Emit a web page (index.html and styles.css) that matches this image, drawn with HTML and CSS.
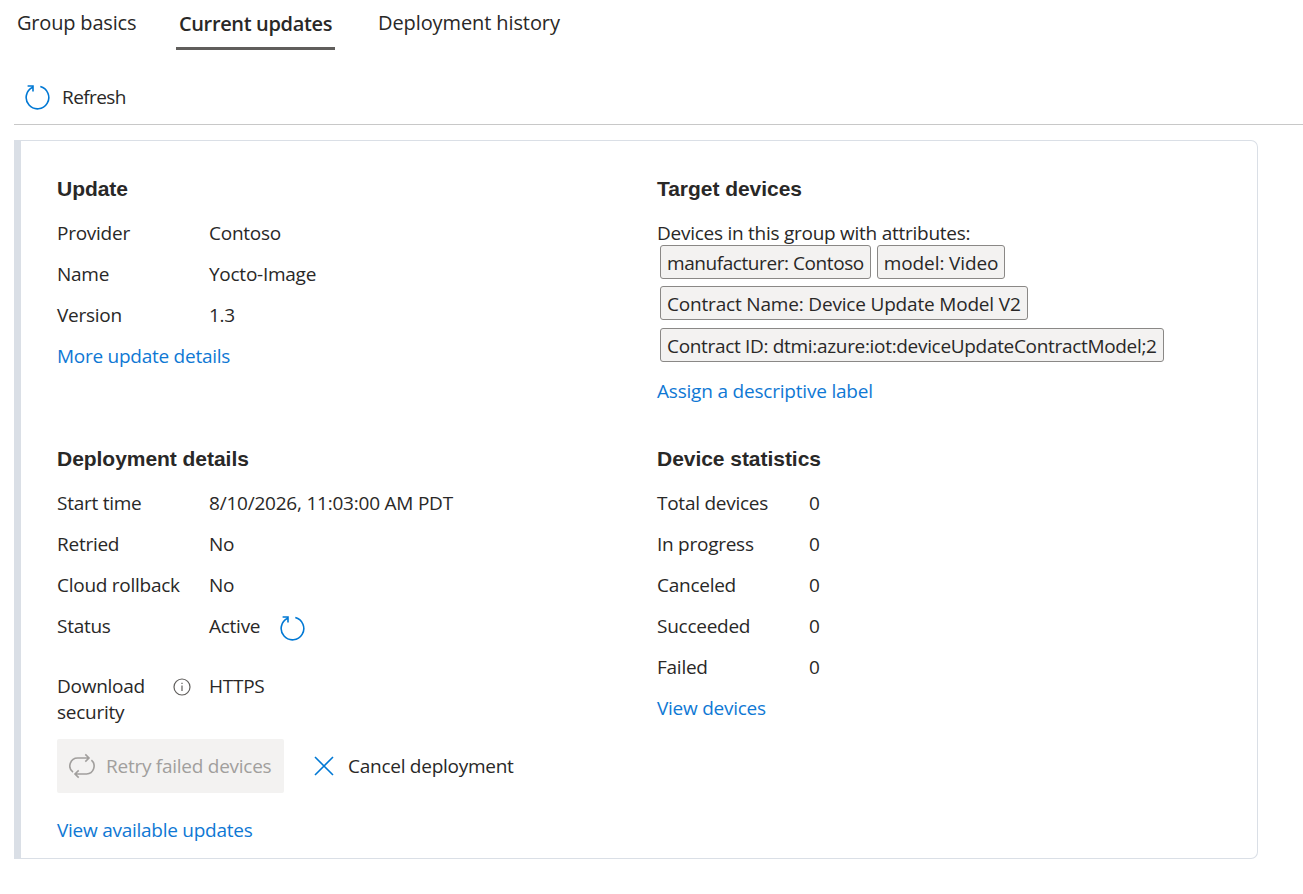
FILE: index.html
```html
<!DOCTYPE html>
<html lang="en">
<head>
    <meta charset="UTF-8">
    <meta name="viewport" content="width=device-width, initial-scale=1.0">
    <title>Current updates</title>
    <link rel="stylesheet" href="styles.css">
</head>
<body>
    <svg class="sprite">
        <symbol id="icon-refresh" viewBox="0 0 26 26">
            <path d="M16.3 2.6A11.3 11.3 0 1 1 8.7 3.3M3.6 2H9V7.5" />
        </symbol>
    </svg>

    <nav class="tabs">
        <a class="tab tab-basics">Group basics</a>
        <a class="tab active">Current updates</a>
        <a class="tab tab-history">Deployment history</a>
    </nav>

    <div class="toolbar">
        <svg class="icon-refresh"><use href="#icon-refresh" /></svg>
        <span class="refresh-label">Refresh</span>
    </div>

    <main class="card">
        <section class="update">
            <h2>Update</h2>
            <dl>
                <dt>Provider</dt><dd>Contoso</dd>
                <dt>Name</dt><dd>Yocto-Image</dd>
                <dt>Version</dt><dd>1.3</dd>
            </dl>
            <a class="link link-more">More update details</a>
        </section>

        <section class="target">
            <h2>Target devices</h2>
            <p>Devices in this group with attributes:</p>
            <div class="chips">
                <span class="chip chip-manufacturer">manufacturer: Contoso</span>
                <span class="chip chip-model">model: Video</span>
                <span class="chip chip-name">Contract Name: Device Update Model V2</span>
                <span class="chip chip-id">Contract ID: dtmi:azure:iot:deviceUpdateContractModel;2</span>
            </div>
            <a class="link link-assign">Assign a descriptive label</a>
        </section>

        <section class="details">
            <h2>Deployment details</h2>
            <dl>
                <dt>Start time</dt><dd class="start-time">8/10/2026, 11:03:00 AM PDT</dd>
                <dt>Retried</dt><dd>No</dd>
                <dt>Cloud rollback</dt><dd>No</dd>
                <dt>Status</dt>
                <dd class="status">Active <svg class="icon-refresh"><use href="#icon-refresh" /></svg></dd>
                <dt class="security">
                    <span>Download security</span>
                    <svg class="icon-info" viewBox="0 0 18 18">
                        <circle cx="9" cy="9" r="8" />
                        <path d="M9 7.5V13M9 4.8V6" />
                    </svg>
                </dt>
                <dd>HTTPS</dd>
            </dl>
            <div class="actions">
                <button class="btn btn-retry" disabled>
                    <svg class="icon-retry" viewBox="0 0 26 26">
                        <path d="M4 19.2A7.9 7.9 0 0 1 8.8 5H20M16.3 1.4L20 5L16.3 8.6M22.4 7.2A7.9 7.9 0 0 1 17.6 21H6M9.7 17.4L6 21L9.7 24.6" />
                    </svg>
                    <span>Retry failed devices</span>
                </button>
                <button class="btn btn-cancel">
                    <svg class="icon-cancel" viewBox="0 0 20 20">
                        <path d="M1 1L19 19M19 1L1 19" />
                    </svg>
                    <span>Cancel deployment</span>
                </button>
            </div>
            <a class="link link-available">View available updates</a>
        </section>

        <section class="statistics">
            <h2>Device statistics</h2>
            <dl>
                <dt>Total devices</dt><dd>0</dd>
                <dt>In progress</dt><dd>0</dd>
                <dt>Canceled</dt><dd>0</dd>
                <dt>Succeeded</dt><dd>0</dd>
                <dt>Failed</dt><dd>0</dd>
            </dl>
            <a class="link">View devices</a>
        </section>
    </main>
</body>
</html>
```
FILE: styles.css
```css
* {
    box-sizing: border-box;
}

body {
    margin: 0;
    background: #fff;
    color: #292827;
    font-family: "Segoe UI", "Open Sans", sans-serif;
    font-size: 19px;
    line-height: 26px;
    letter-spacing: -0.26px;
    overflow: hidden;
}

.sprite {
    display: none;
}

svg {
    fill: none;
    flex-shrink: 0;
}

.tabs {
    display: flex;
    height: 50px;
    padding-left: 17px;
}

.tab {
    padding-top: 10px;
    font-size: 20px;
    letter-spacing: -0.1px;
    white-space: nowrap;
}

.tab-basics {
    width: 159px;
    letter-spacing: -0.18px;
}

.tab.active {
    width: 159px;
    margin-right: 43px;
    padding-top: 11px;
    border-bottom: 3px solid #605e5c;
    text-align: center;
    font-weight: 600;
    letter-spacing: -0.35px;
}

.toolbar {
    display: flex;
    align-items: center;
    gap: 12px;
    height: 55px;
    margin: 20px 0 15px 14px;
    padding-left: 10px;
    border-bottom: 1px solid #c8c8c8;
}

.refresh-label {
    letter-spacing: -0.6px;
}

.icon-refresh {
    width: 26px;
    height: 26px;
    stroke: #0078d4;
    stroke-width: 1.6;
}

.card {
    display: grid;
    grid-template-columns: 600px 1fr;
    grid-template-rows: 270px auto;
    width: 1244px;
    height: 719px;
    padding: 35px 36px 0;
    border: 1px solid #dadfe6;
    border-left: 7px solid #dadfe6;
    border-radius: 0 7px 7px 0;
    margin-left: 14px;
}

h2 {
    margin: 0 0 18px;
    font-family: Arial, "Liberation Sans", sans-serif;
    font-size: 21px;
    line-height: 26px;
    letter-spacing: -0.04px;
}

p {
    margin: 0;
}

dl {
    display: grid;
    grid-template-columns: 152px 1fr;
    row-gap: 15px;
    margin: 0 0 15px;
}

dd {
    margin: 0;
}

.link {
    color: #0f78d4;
}

.link-assign {
    letter-spacing: -0.2px;
}

.start-time {
    letter-spacing: -0.22px;
}

.chips {
    display: flex;
    flex-wrap: wrap;
    gap: 7px 6px;
    width: 520px;
    margin: -1px 0 16px 3px;
}

.chip {
    height: 34px;
    padding: 4px 6px;
    background: #f3f2f1;
    border: 1px solid #8a8886;
    border-radius: 3px;
    white-space: nowrap;
}

.chip-manufacturer {
    letter-spacing: -0.43px;
}

.chip-model {
    letter-spacing: -0.1px;
}

.chip-name {
    letter-spacing: -0.18px;
}

.chip-id {
    margin-top: 1px;
    letter-spacing: -0.32px;
}

.status {
    display: flex;
    gap: 19px;
    height: 45px;
}

.status .icon-refresh {
    margin-top: 2px;
}

.security {
    display: flex;
    justify-content: space-between;
    padding-right: 18px;
}

.security span {
    width: 100px;
}

.icon-info {
    width: 18px;
    height: 18px;
    margin-top: 5px;
    stroke: #605e5c;
    stroke-width: 1.2;
}

.actions {
    display: flex;
    margin: -1px 0 24px;
}

.btn {
    display: flex;
    align-items: center;
    height: 54px;
    padding: 0;
    border: none;
    background: none;
    color: inherit;
    font: inherit;
    letter-spacing: inherit;
    white-space: nowrap;
}

.btn-retry {
    gap: 11px;
    width: 227px;
    padding-left: 12px;
    border-radius: 2px;
    background: #f3f2f1;
    color: #a19f9d;
}

.icon-retry {
    width: 26px;
    height: 26px;
    stroke: #a19f9d;
    stroke-width: 1.6;
}

.btn-cancel {
    gap: 14px;
    margin-left: 30px;
}

.icon-cancel {
    width: 20px;
    height: 20px;
    stroke: #0078d4;
    stroke-width: 1.6;
}
```
